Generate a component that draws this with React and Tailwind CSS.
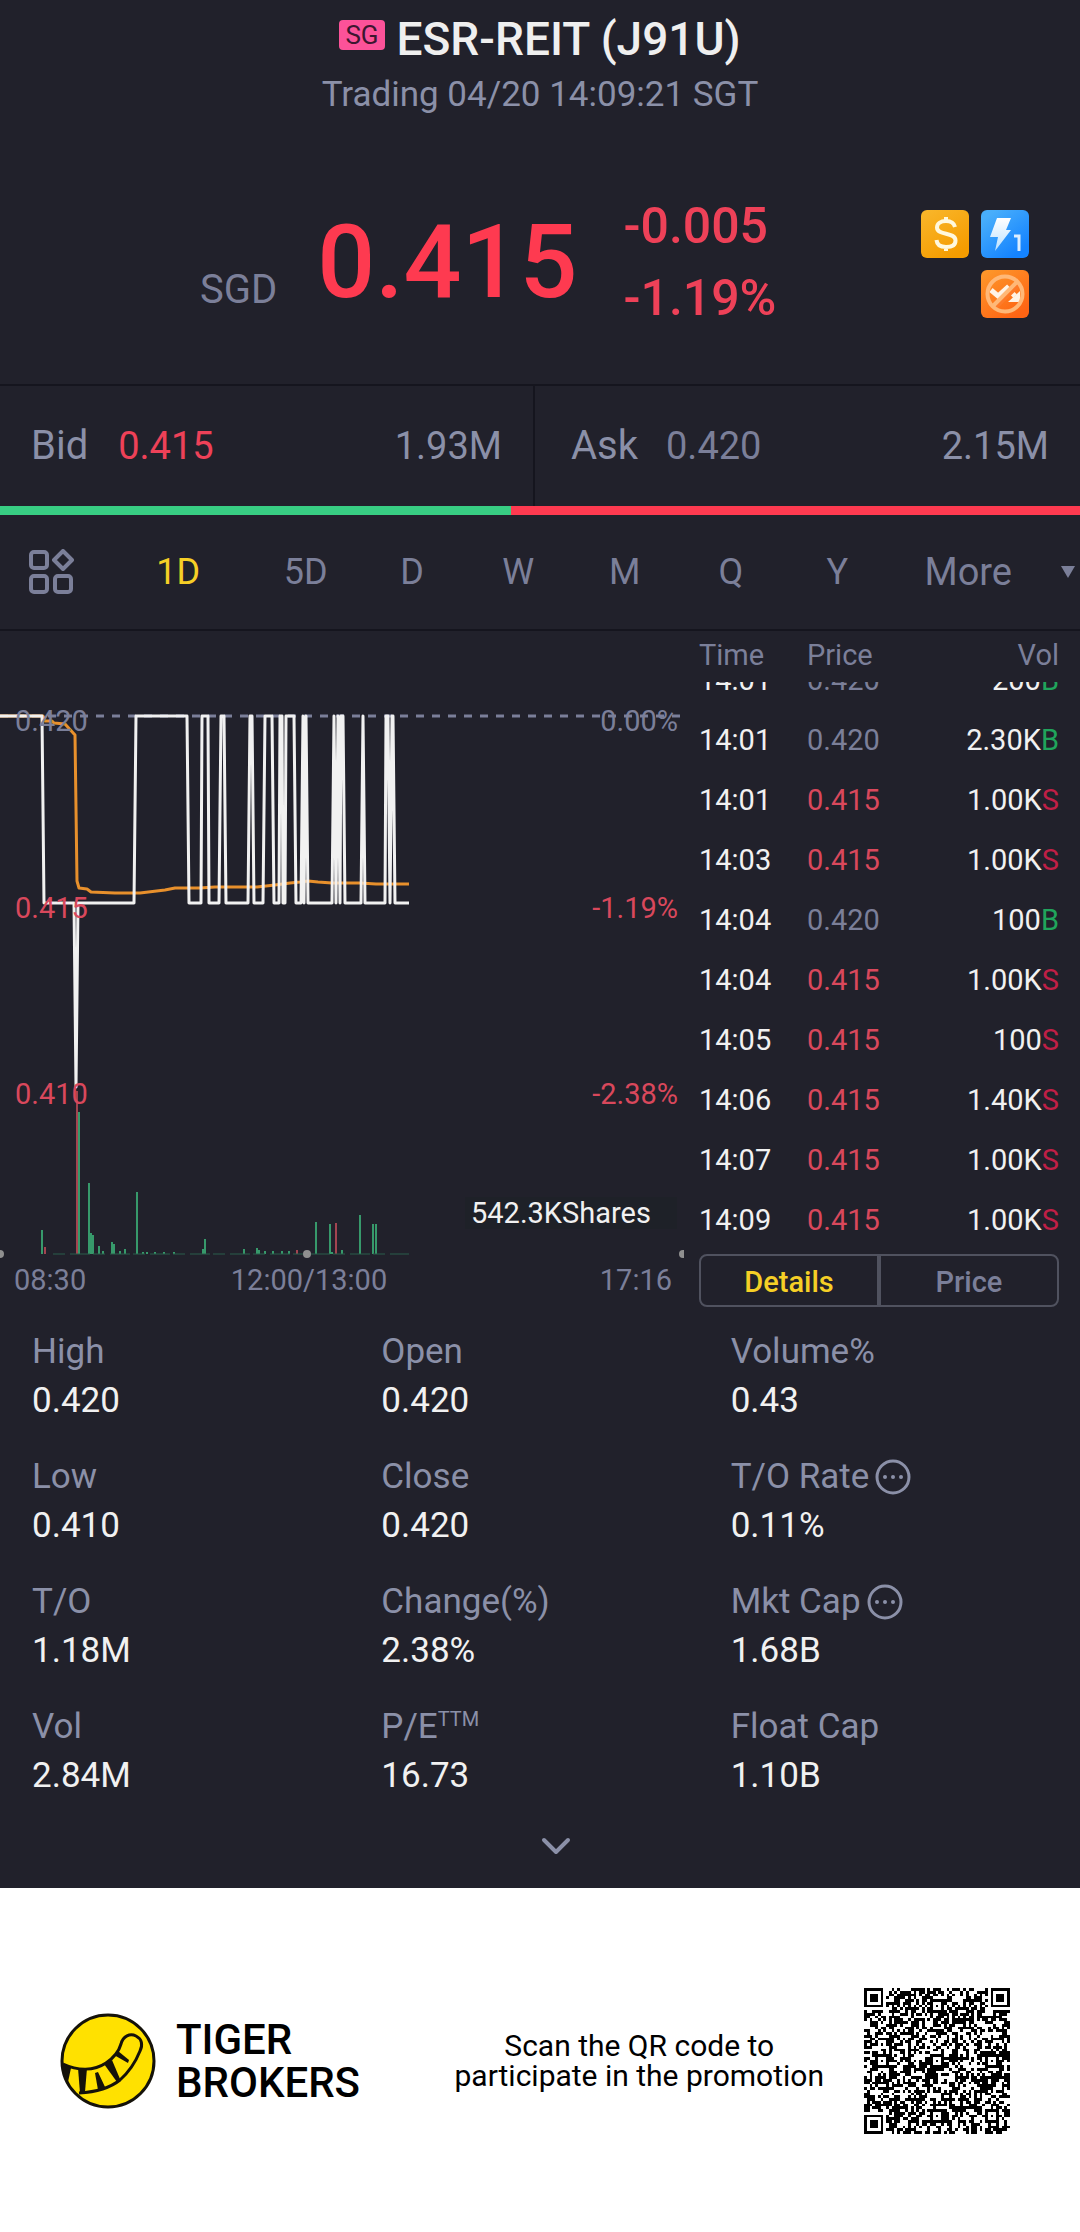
import { useState } from "react";

const periods = ["1D", "5D", "D", "W", "M", "Q", "Y"];

const trades = [
  { time: "14:01", price: "0.420", vol: "200", side: "B" },
  { time: "14:01", price: "0.420", vol: "2.30K", side: "B" },
  { time: "14:01", price: "0.415", vol: "1.00K", side: "S" },
  { time: "14:03", price: "0.415", vol: "1.00K", side: "S" },
  { time: "14:04", price: "0.420", vol: "100", side: "B" },
  { time: "14:04", price: "0.415", vol: "1.00K", side: "S" },
  { time: "14:05", price: "0.415", vol: "100", side: "S" },
  { time: "14:06", price: "0.415", vol: "1.40K", side: "S" },
  { time: "14:07", price: "0.415", vol: "1.00K", side: "S" },
  { time: "14:09", price: "0.415", vol: "1.00K", side: "S" },
];

const stats = [
  { label: "High", value: "0.420" },
  { label: "Open", value: "0.420" },
  { label: "Volume%", value: "0.43" },
  { label: "Low", value: "0.410" },
  { label: "Close", value: "0.420" },
  { label: "T/O Rate", value: "0.11%", more: true },
  { label: "T/O", value: "1.18M" },
  { label: "Change(%)", value: "2.38%" },
  { label: "Mkt Cap", value: "1.68B", more: true },
  { label: "Vol", value: "2.84M" },
  { label: "P/E", sup: "TTM", value: "16.73" },
  { label: "Float Cap", value: "1.10B" },
];

const pricePath =
  "M0 85H42L44 272H74L76 456L78 272H134L136 85H187L189 272H201L202 85H208L209 272H219L221 85H224L226 272H248L250 85H252L254 272H263L265 85H272L274 272H279L280 85H282L283 272H285L286 85H294L296 272H301L303 85L304 272L306 85L308 272H332L334 85L336 272L338 85L340 272L341 85H343L345 272H361L363 85L365 272H385L386 85H388L390 272L392 85H393L395 272H409";

const averagePath =
  "M0 85H43L45 90H52L54 92L65 93L75 104L77 250L79 257L87 258L91 261L115 262H140L165 259L175 257H200L215 256H257L275 254L290 252L300 251L308 250L318 251L332 252H360L376 253H409";

const volumeBars = [
  { x: 42, h: 24 },
  { x: 45, h: 7, down: true },
  { x: 77, h: 163, down: true },
  { x: 79, h: 142 },
  { x: 89, h: 71 },
  { x: 91, h: 21 },
  { x: 93, h: 19 },
  { x: 99, h: 8 },
  { x: 103, h: 3 },
  { x: 112, h: 12 },
  { x: 114, h: 10 },
  { x: 120, h: 3 },
  { x: 125, h: 5 },
  { x: 137, h: 62 },
  { x: 143, h: 2 },
  { x: 147, h: 2 },
  { x: 155, h: 2 },
  { x: 164, h: 2 },
  { x: 174, h: 2 },
  { x: 203, h: 5 },
  { x: 205, h: 15 },
  { x: 244, h: 5 },
  { x: 257, h: 6 },
  { x: 259, h: 4 },
  { x: 265, h: 3 },
  { x: 273, h: 3 },
  { x: 282, h: 3 },
  { x: 289, h: 3 },
  { x: 297, h: 4, down: true },
  { x: 316, h: 32 },
  { x: 330, h: 30 },
  { x: 332, h: 2 },
  { x: 336, h: 31, down: true },
  { x: 342, h: 4 },
  { x: 360, h: 39 },
  { x: 373, h: 30 },
  { x: 376, h: 30 },
];

const QR_SIZE = 53;

const ringCell = (dx, dy, radii) => radii.includes(Math.max(Math.abs(dx), Math.abs(dy)));

function qrCell(x, y, noise) {
  const finders = [[3, 3], [49, 3], [3, 49]];
  for (const [cx, cy] of finders) {
    if (Math.abs(x - cx) <= 4 && Math.abs(y - cy) <= 4) {
      return ringCell(x - cx, y - cy, [0, 1, 3]);
    }
  }
  const aligns = [[26, 6], [6, 26], [26, 26], [46, 26], [26, 46], [46, 46]];
  for (const [cx, cy] of aligns) {
    if (Math.abs(x - cx) <= 2 && Math.abs(y - cy) <= 2) {
      return ringCell(x - cx, y - cy, [0, 2]);
    }
  }
  if (x === 6) return y % 2 === 0;
  if (y === 6) return x % 2 === 0;
  return noise;
}

function buildQr() {
  let seed = 9127;
  let d = "";
  for (let y = 0; y < QR_SIZE; y++) {
    for (let x = 0; x < QR_SIZE; x++) {
      seed = (seed * 16807) % 2147483647;
      if (qrCell(x, y, seed / 2147483647 < 0.5)) {
        d += `M${x} ${y}h1v1h-1z`;
      }
    }
  }
  return d;
}

const qrPath = buildQr();

function Header() {
  return (
    <header className="flex flex-col items-center">
      <div className="flex items-center gap-3 pt-[5px]">
        <span className="mb-2 flex h-[30px] items-center rounded-sm bg-[#fc5299] px-1.5 text-[26px] text-[#3d1630]">
          SG
        </span>
        <h1 className="text-[46px] leading-[68px] font-medium text-[#efefef]">
          ESR-REIT (J91U)
        </h1>
      </div>
      <p className="text-[35px] leading-[44px] text-[#8b90a8]">
        Trading 04/20 14:09:21 SGT
      </p>
    </header>
  );
}

function Badges() {
  return (
    <div className="grid grid-cols-2 gap-3">
      <svg viewBox="0 0 48 48" className="size-12">
        <defs>
          <linearGradient id="gold" x1="0" y1="0" x2="0.6" y2="1">
            <stop offset="0" stopColor="#f9b72c" />
            <stop offset="1" stopColor="#f59c00" />
          </linearGradient>
        </defs>
        <rect width="48" height="48" rx="6" fill="url(#gold)" />
        <path
          d="M34 17C33 13 29.500 11 25 11C19.500 11 16 13.500 16 17.500C16 26 34.500 21.500 34.500 30.500C34.500 35 30.500 37 25 37C19.500 37 16 35 15.500 30M25 7V11M25 37V41"
          fill="none"
          stroke="#fff8dd"
          strokeWidth="4"
        />
      </svg>
      <svg viewBox="0 0 48 48" className="size-12">
        <defs>
          <linearGradient id="blue" x1="0.3" y1="0" x2="0.9" y2="0.8">
            <stop offset="0" stopColor="#48aefb" />
            <stop offset="1" stopColor="#1483ff" />
          </linearGradient>
          <linearGradient id="bolt" x1="0" y1="0" x2="0" y2="1">
            <stop offset="0" stopColor="#ffffff" />
            <stop offset="1" stopColor="#b9e0ff" />
          </linearGradient>
        </defs>
        <rect width="48" height="48" rx="6" fill="url(#blue)" />
        <path d="M16 8H30L25 20H30L14 41L17 27H9Z" fill="url(#bolt)" />
        <path d="M33 26H38V41" fill="none" stroke="#dceeff" strokeWidth="3" />
      </svg>
      <svg viewBox="0 0 48 48" className="col-start-2 size-12">
        <defs>
          <linearGradient id="orange" x1="0" y1="0" x2="0.7" y2="1">
            <stop offset="0" stopColor="#fd9a2c" />
            <stop offset="1" stopColor="#fe6413" />
          </linearGradient>
        </defs>
        <rect width="48" height="48" rx="6" fill="url(#orange)" />
        <path d="M10 20L17 26L26 18L34 26" fill="none" stroke="#fff3e6" strokeWidth="5" />
        <path d="M39 21V32H27Z" fill="#fff3e6" />
        <path d="M14 38L38 15" stroke="#fe7a28" strokeWidth="4" />
        <path d="M12 36L36 12" stroke="#ffb877" strokeWidth="4" />
        <circle cx="24" cy="24" r="17.500" fill="none" stroke="#ffb877" strokeWidth="4" />
      </svg>
    </div>
  );
}

function Quote() {
  return (
    <section className="flex items-start pt-[73px] pr-[51px] pb-[50px] pl-[200px]">
      <div className="flex items-end gap-10 pt-4">
        <span className="text-[40px] leading-[56px] text-[#7b7f99]">SGD</span>
        <span className="text-[102px] leading-[112px] font-medium text-[#fe3a50]">0.415</span>
      </div>
      <div className="ml-[46px] text-[50px] leading-[72px] font-medium text-[#ee4158]">
        <p>-0.005</p>
        <p>-1.19%</p>
      </div>
      <div className="ml-auto pt-5">
        <Badges />
      </div>
    </section>
  );
}

function BidAsk() {
  return (
    <section className="border-t-2 border-[#15151e]">
      <div className="flex text-[38px] leading-[120px] text-[#8b90a8]">
        <div className="flex w-[533px] pr-[31px] pl-[31px]">
          <span className="text-[40px]">Bid</span>
          <span className="ml-[30px] text-[#ee4158]">0.415</span>
          <span className="ml-auto">1.93M</span>
        </div>
        <div className="flex flex-1 border-l-2 border-[#15151e] pr-[31px] pl-9">
          <span className="text-[40px]">Ask</span>
          <span className="ml-7 text-[#7b7f99]">0.420</span>
          <span className="ml-auto">2.15M</span>
        </div>
      </div>
      <div className="flex h-[9px] bg-[#fe3a50]">
        <div className="bg-[#38cd83]" style={{ width: `${(1.93 / 4.08) * 100}%` }} />
      </div>
    </section>
  );
}

function PeriodTabs() {
  const [period, setPeriod] = useState("1D");

  return (
    <nav className="flex h-[116px] items-center border-b-2 border-[#15151e] pr-1 pl-7 text-4xl text-[#7b7f99]">
      <button type="button" aria-label="Layout">
        <svg viewBox="0 0 46 46" className="size-[46px]" fill="none" stroke="#7b7f99" strokeWidth="4">
          <rect x="3" y="3" width="16" height="16" rx="3" />
          <rect x="3" y="27" width="16" height="16" rx="3" />
          <rect x="27" y="27" width="16" height="16" rx="3" />
          <path d="M35 2L44 11L35 20L26 11Z" strokeLinejoin="round" />
        </svg>
      </button>
      <div className="ml-[30px] grid flex-1 grid-cols-[148fr_repeat(6,106fr)]">
        {periods.map((p) => (
          <button
            key={p}
            type="button"
            onClick={() => setPeriod(p)}
            className={p === period ? "text-[#f6cf26]" : "text-[#7b7f99]"}
          >
            {p}
          </button>
        ))}
      </div>
      <button type="button" className="ml-[34px] flex items-center gap-12 text-[38px]">
        More
        <svg viewBox="0 0 16 14" className="h-[14px] w-4" fill="#7b7f99">
          <path d="M1 1H15L8 13Z" />
        </svg>
      </button>
    </nav>
  );
}

function Chart() {
  return (
    <div>
      <svg viewBox="0 0 684 632" className="block w-full text-[29px]">
        <path d="M0 85H680" stroke="#7b7f99" strokeWidth="3" strokeDasharray="8 8" />
        <path d={averagePath} fill="none" stroke="#e8902c" strokeWidth="3" strokeLinejoin="round" />
        <path d={pricePath} fill="none" stroke="#f1f1f1" strokeWidth="3" strokeLinejoin="round" />
        {volumeBars.map((bar) => (
          <rect
            key={bar.x}
            x={bar.x - 1}
            y={623 - bar.h}
            width="2"
            height={bar.h}
            fill={bar.down ? "#a34450" : "#37996b"}
          />
        ))}
        <path d="M53 623H409" stroke="#2a5f4c" strokeDasharray="12 5 20 3" />
        <circle cx="0" cy="623" r="4" fill="#8f8f8f" />
        <circle cx="307" cy="623" r="4" fill="#8f8f8f" />
        <circle cx="683" cy="623" r="4" fill="#8f8f8f" />
        <g fill="#7b7f99">
          <text x="15" y="100">0.420</text>
          <text x="678" y="100" textAnchor="end">0.00%</text>
        </g>
        <g fill="#d9485c">
          <text x="15" y="287">0.415</text>
          <text x="15" y="473">0.410</text>
          <text x="678" y="287" textAnchor="end">-1.19%</text>
          <text x="678" y="473" textAnchor="end">-2.38%</text>
        </g>
        <rect x="465" y="566" width="212" height="32" fill="#1e2128" />
        <text x="471" y="592" fill="#f1f1f1">542.3KShares</text>
      </svg>
      <div className="grid grid-cols-[205fr_180fr_273fr] pr-3 pl-[14px] text-[29px] leading-[34px] text-[#7b7f99]">
        <span>08:30</span>
        <span className="text-center">12:00/13:00</span>
        <span className="text-right">17:16</span>
      </div>
    </div>
  );
}

function Trades() {
  const [view, setView] = useState("Details");

  return (
    <div className="pr-[21px] pl-[15px] text-[29px]">
      <div className="flex leading-[48px] text-[#7b7f99]">
        <span className="w-[108px]">Time</span>
        <span>Price</span>
        <span className="ml-auto">Vol</span>
      </div>
      {/* the list stays scrolled to its newest trade */}
      <div className="mt-[3px] flex h-[568px] flex-col justify-end overflow-hidden">
        <table className="w-full leading-[60px]">
          <tbody>
            {trades.map((trade, i) => (
              <tr key={i}>
                <td className="w-[108px] p-0 text-[#f1f1f1]">{trade.time}</td>
                <td className={trade.price === "0.415" ? "p-0 text-[#d9485c]" : "p-0 text-[#7b7f99]"}>
                  {trade.price}
                </td>
                <td className="p-0 text-right text-[#f1f1f1]">
                  {trade.vol}
                  <span className={trade.side === "B" ? "text-[#20a45c]" : "text-[#c01f46]"}>
                    {trade.side}
                  </span>
                </td>
              </tr>
            ))}
          </tbody>
        </table>
      </div>
      <div className="mt-1 flex h-[53px] divide-x-4 divide-[#50525f] overflow-hidden rounded-lg border-2 border-[#50525f] font-medium">
        {["Details", "Price"].map((name) => (
          <button
            key={name}
            type="button"
            onClick={() => setView(name)}
            className={name === view ? "flex-1 pt-1 text-[#f6cf26]" : "flex-1 pt-1 text-[#7b7f99]"}
          >
            {name}
          </button>
        ))}
      </div>
    </div>
  );
}

function Stats() {
  return (
    <section className="pt-5 pl-8">
      <dl className="grid grid-cols-3 gap-y-[27px] text-[35px] leading-[49px]">
        {stats.map((item) => (
          <div key={item.label}>
            <dt className="flex items-center text-[#8b90a8]">
              {item.label}
              {item.sup && <span className="mb-4 text-xl leading-6">{item.sup}</span>}
              {item.more && (
                <svg viewBox="0 0 36 36" className="ml-1.5 size-9" fill="#8b90a8">
                  <circle cx="18" cy="18" r="16" fill="none" stroke="#8b90a8" strokeWidth="3" />
                  <circle cx="10" cy="18" r="2" />
                  <circle cx="18" cy="18" r="2" />
                  <circle cx="26" cy="18" r="2" />
                </svg>
              )}
            </dt>
            <dd className="text-[#f1f1f1]">{item.value}</dd>
          </div>
        ))}
      </dl>
      <button type="button" aria-label="Show more" className="mx-auto mt-8 mb-7 block">
        <svg viewBox="0 0 32 28" className="h-7 w-8">
          <path
            d="M4 8L16 20L28 8"
            fill="none"
            stroke="#8b90a8"
            strokeWidth="4"
            strokeLinecap="round"
            strokeLinejoin="round"
          />
        </svg>
      </button>
    </section>
  );
}

function TigerLogo() {
  return (
    <svg viewBox="0 0 96 96" className="size-24">
      <circle cx="48" cy="48" r="46" fill="#ffe100" stroke="#15120a" strokeWidth="3" />
      <g fill="none" stroke="#15120a" strokeWidth="3">
        <path d="M3 51C18 58 34 58 46 50C55 44 59 38 61 31C63 23 70 20 76 23C82 26 83 32 80 38C76 48 70 58 60 67C50 75 36 79 19 80" />
      </g>
      <g fill="#15120a">
        <path d="M2 50L11 55L8 69C4 63 2 57 2 50Z" />
        <path d="M18 55H27L25 79L20 80Z" />
        <path d="M35 60L38 59L45 74L38 77Z" />
        <path d="M44 51L52 47L60 66L57 69Z" />
        <path d="M54 42L58 38L69 47L68 50Z" />
      </g>
    </svg>
  );
}

function Footer() {
  return (
    <footer className="flex h-[345px] items-center bg-white pr-[70px] pl-[60px] text-black">
      <TigerLogo />
      <p className="ml-5 text-[42px] leading-[43px] font-medium">
        TIGER
        <br />
        BROKERS
      </p>
      <p className="mr-10 ml-auto text-center text-[30px] leading-[30px]">
        Scan the QR code to
        <br />
        participate in the promotion
      </p>
      <svg
        viewBox={`0 0 ${QR_SIZE} ${QR_SIZE}`}
        className="size-[146px]"
        shapeRendering="crispEdges"
        role="img"
        aria-label="QR code"
      >
        <path d={qrPath} />
      </svg>
    </footer>
  );
}

function App() {
  return (
    <main className="bg-[#21212b] font-[Roboto,sans-serif]">
      <Header />
      <Quote />
      <BidAsk />
      <PeriodTabs />
      <section className="grid grid-cols-[684fr_396fr]">
        <Chart />
        <Trades />
      </section>
      <Stats />
      <Footer />
    </main>
  );
}

export default App;
